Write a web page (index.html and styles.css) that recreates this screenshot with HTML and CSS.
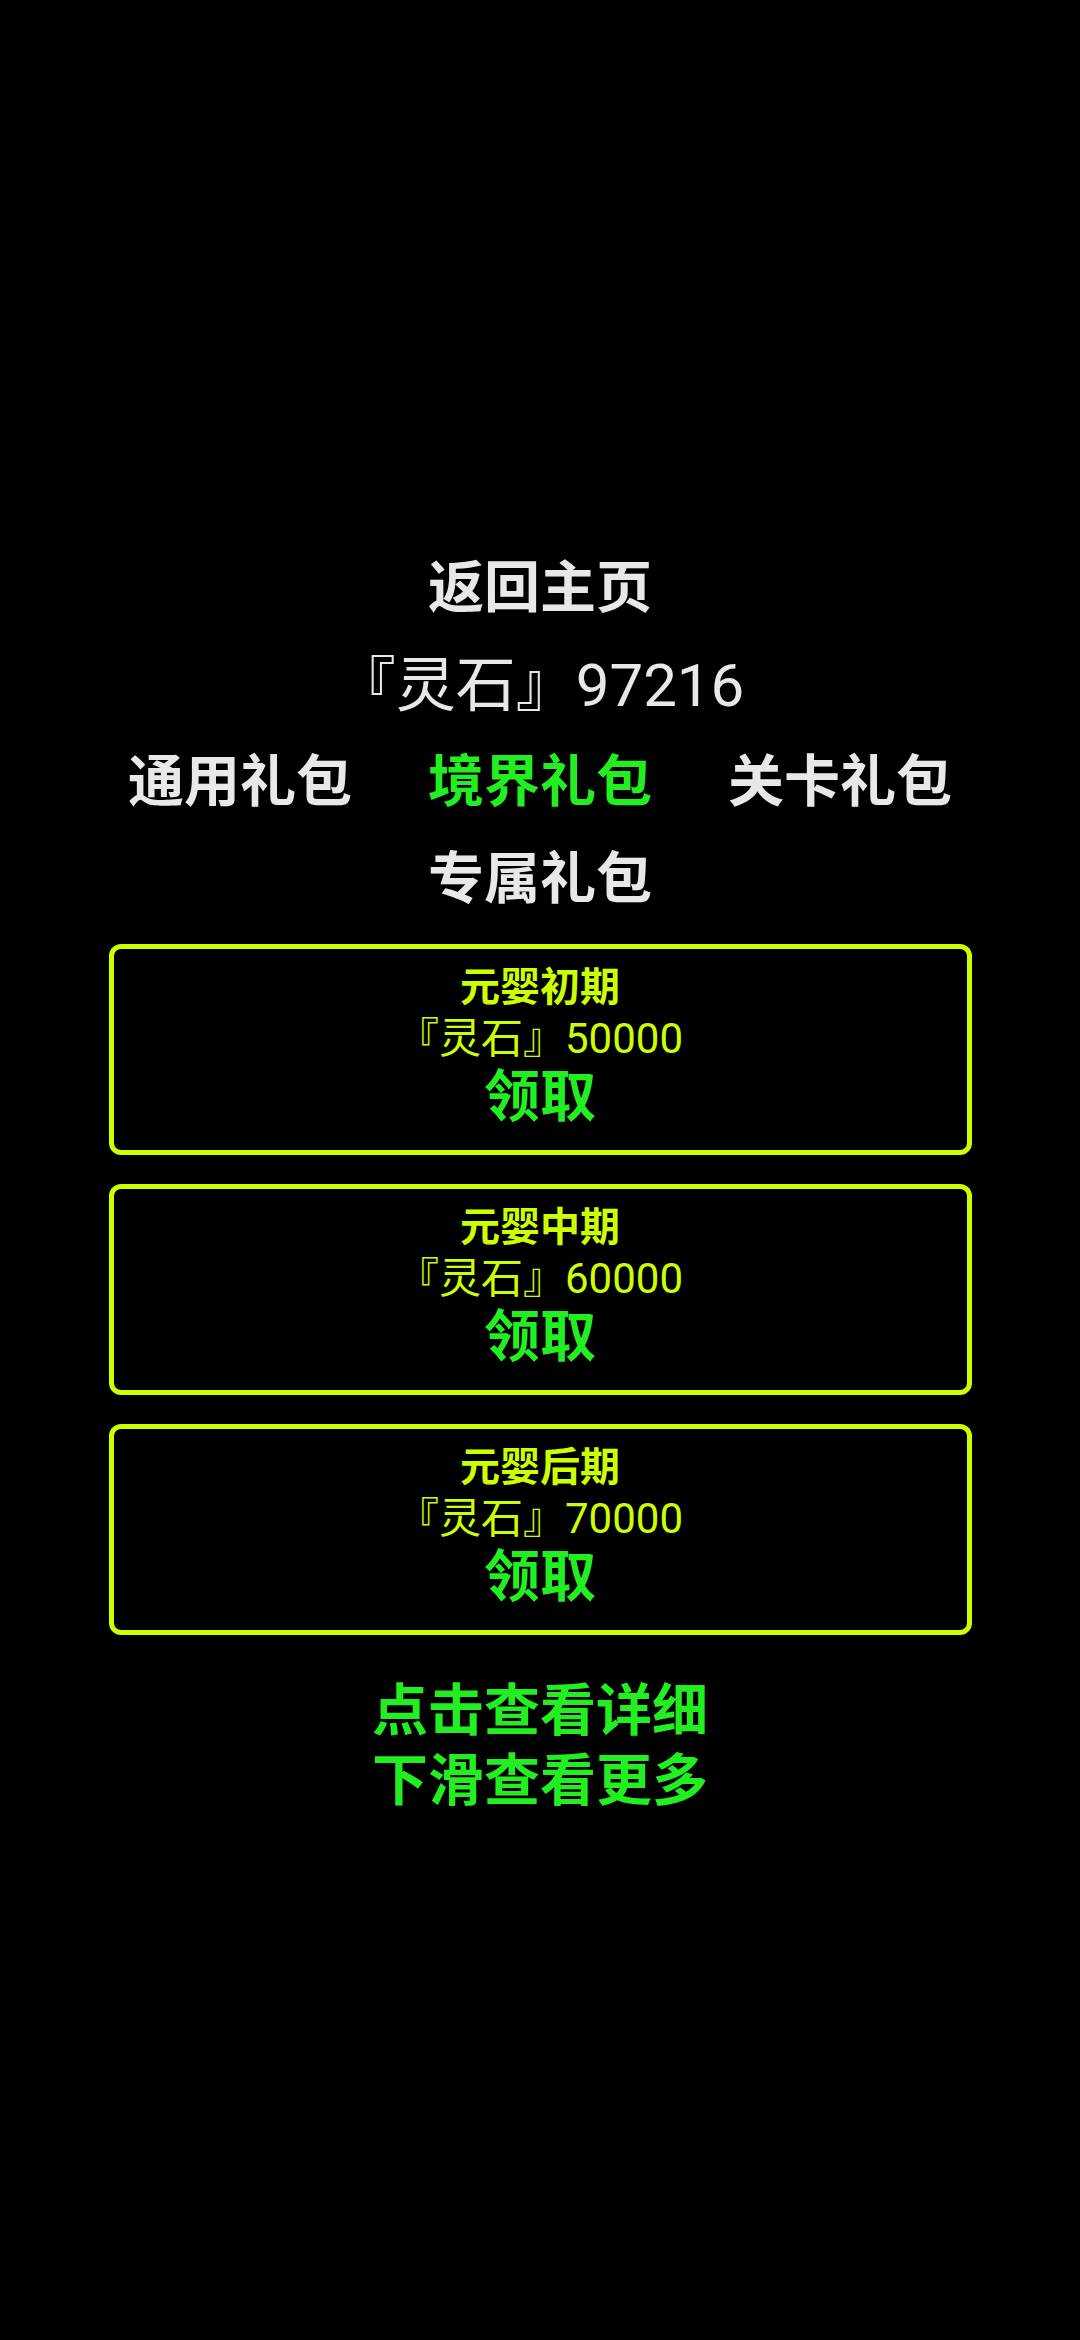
FILE: index.html
```html
<!DOCTYPE html>
<html lang="zh-CN">
<head>
<meta charset="utf-8">
<title>礼包</title>
<link rel="stylesheet" href="styles.css">
</head>
<body>
<div class="page">
  <div class="line home">返回主页</div>
  <div class="line stones">『灵石』97216</div>
  <div class="tabs">
    <span class="tab">通用礼包</span>
    <span class="tab active">境界礼包</span>
    <span class="tab">关卡礼包</span>
  </div>
  <div class="line tab">专属礼包</div>

  <div class="cards">
    <div class="card">
      <div class="card-title">元婴初期</div>
      <div class="card-amount">『灵石』50000</div>
      <div class="card-btn">领取</div>
    </div>
    <div class="card">
      <div class="card-title">元婴中期</div>
      <div class="card-amount">『灵石』60000</div>
      <div class="card-btn">领取</div>
    </div>
    <div class="card">
      <div class="card-title">元婴后期</div>
      <div class="card-amount">『灵石』70000</div>
      <div class="card-btn">领取</div>
    </div>
  </div>

  <div class="hints">
    <div class="hint">点击查看详细</div>
    <div class="hint">下滑查看更多</div>
  </div>
</div>
</body>
</html>
```
FILE: styles.css
```css
html, body {
  margin: 0;
  padding: 0;
  background: #000;
}
body {
  width: 1080px;
  height: 2340px;
  overflow: hidden;
  font-family: Roboto, "Noto Sans CJK SC", sans-serif;
  color: #e8e8e8;
}
.page {
  padding-top: 540px;
  display: flex;
  flex-direction: column;
  align-items: center;
}
.line {
  font-size: 56px;
  line-height: 97px;
  height: 97px;
  text-align: center;
  white-space: nowrap;
}
.home {
  font-weight: 700;
}
.stones {
  font-size: 60px;
  font-weight: 400;
}
.tabs {
  display: flex;
  justify-content: center;
  gap: 76px;
  height: 97px;
  line-height: 97px;
}
.tab {
  font-size: 56px;
  font-weight: 700;
  color: #e8e8e8;
  white-space: nowrap;
}
.tab.active {
  color: #22ee22;
}
.cards {
  margin-top: 16px;
  display: flex;
  flex-direction: column;
  gap: 29px;
}
.card {
  box-sizing: border-box;
  width: 863px;
  height: 211px;
  border: 5px solid #ccff00;
  border-radius: 12px;
  padding: 14px 0 21px;
  display: flex;
  flex-direction: column;
  align-items: center;
  color: #ccff00;
}
.card-title {
  font-size: 40px;
  font-weight: 700;
  line-height: 50px;
}
.card-amount {
  font-size: 42px;
  font-weight: 400;
  line-height: 52px;
}
.card-btn {
  font-size: 56px;
  font-weight: 700;
  line-height: 64px;
  color: #22ee22;
}
.hints {
  margin-top: 41px;
  display: flex;
  flex-direction: column;
  align-items: center;
}
.hint {
  font-size: 56px;
  font-weight: 700;
  line-height: 70px;
  color: #22ee22;
}
```
